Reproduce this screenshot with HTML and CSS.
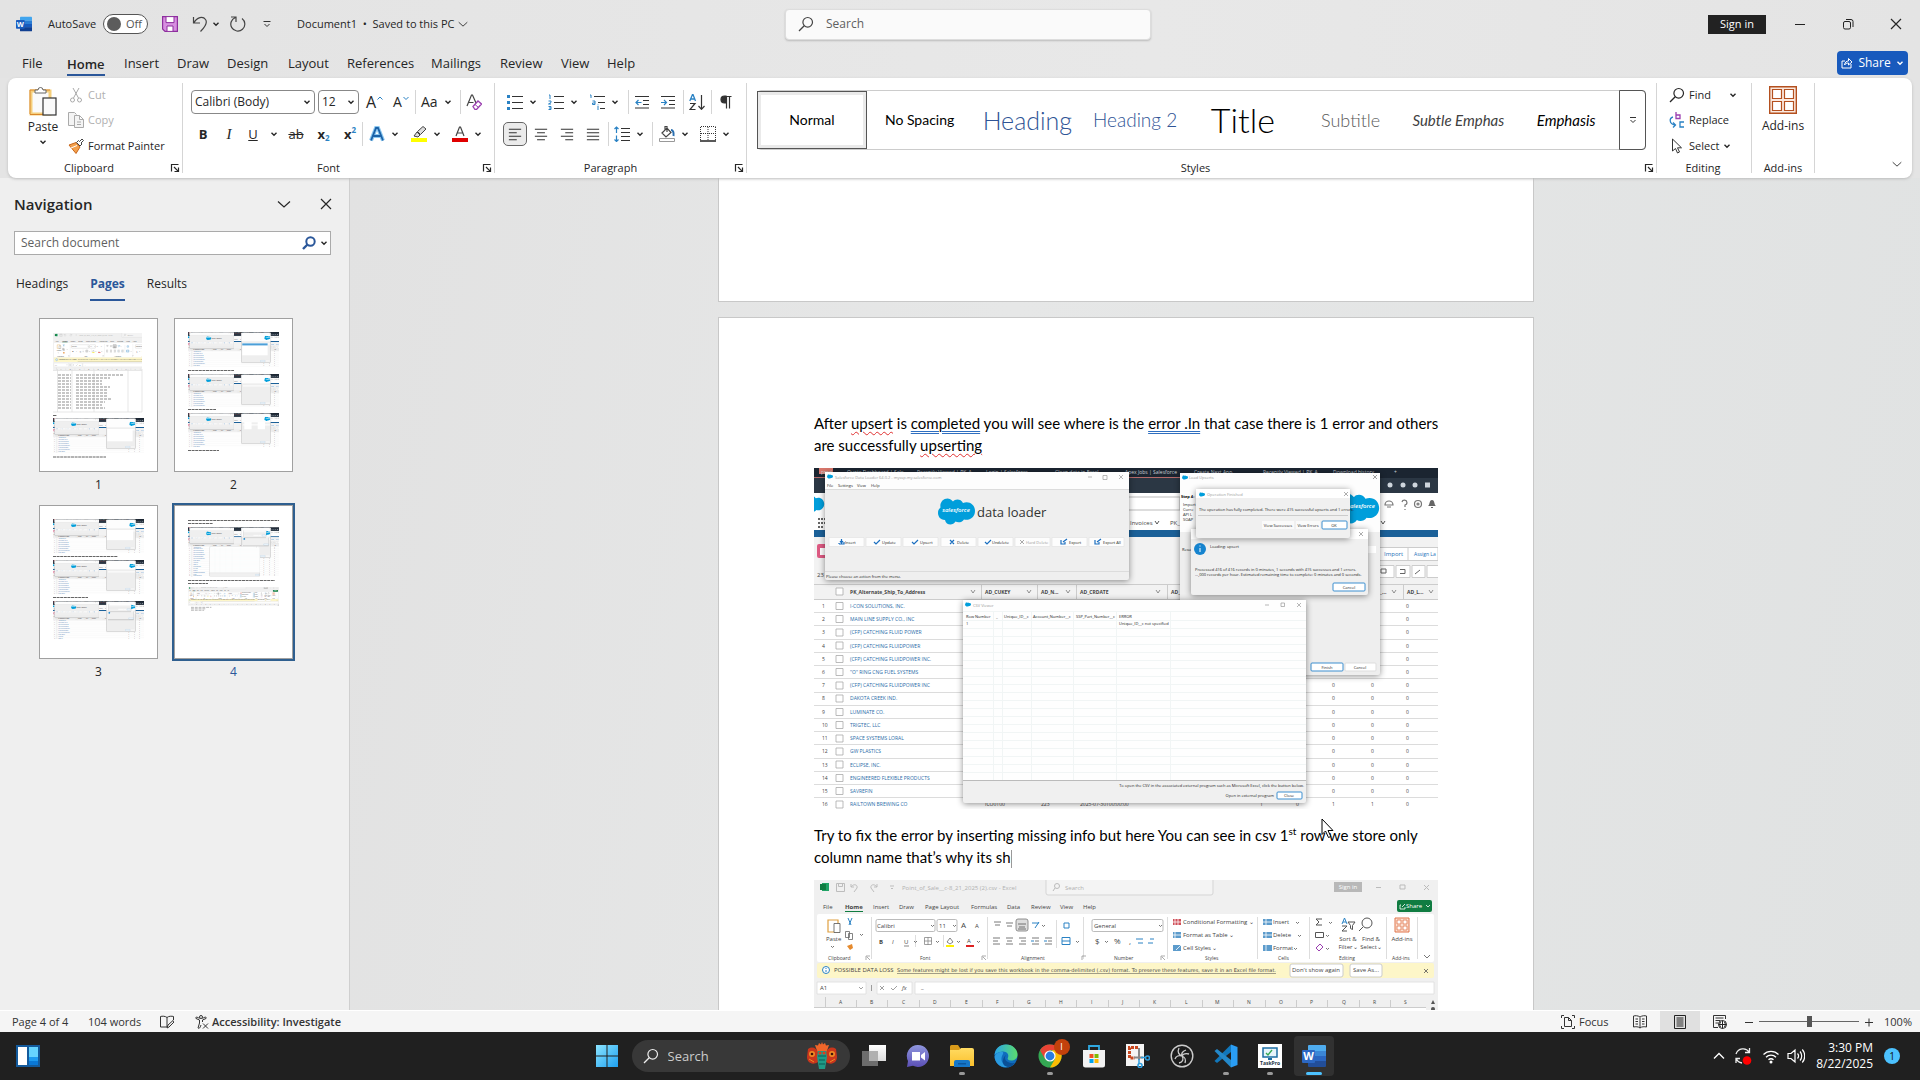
FILE: index.html
```html
<!DOCTYPE html>
<html lang="en">
<head>
<meta charset="utf-8">
<meta name="viewport" content="width=device-width, initial-scale=1">
<title>Document1 - Word</title>
<link rel="stylesheet" href="styles.css">
</head>
<body>
<svg class="defs" aria-hidden="true">
  <defs>
    <linearGradient id="g-win" x1="0" y1="0" x2="1" y2="1"><stop offset="0" stop-color="#8be4ff"/><stop offset="1" stop-color="#1ea0f0"/></linearGradient>
    <linearGradient id="g-chat" x1="0" y1="0" x2="0" y2="1"><stop offset="0" stop-color="#8f96dd"/><stop offset="1" stop-color="#5b4fb5"/></linearGradient>
    <linearGradient id="g-folder" x1="0" y1="0" x2="0" y2="1"><stop offset="0" stop-color="#ffdb62"/><stop offset="1" stop-color="#fbc02d"/></linearGradient>
    <linearGradient id="g-edge" x1="0" y1="0" x2="1" y2="0"><stop offset="0" stop-color="#2aa5e8"/><stop offset="1" stop-color="#5bdc6c"/></linearGradient>
    <linearGradient id="g-task" x1="0" y1="0" x2="0" y2="1"><stop offset="0" stop-color="#fff"/><stop offset="1" stop-color="#dcdcdc"/></linearGradient>
  </defs>
  <symbol id="chev" viewBox="0 0 8 8"><path d="M1.5 2.8 4 5.2 6.5 2.8" fill="none" stroke="currentColor" stroke-width="1.4"/></symbol>
  <symbol id="chev-lg" viewBox="0 0 14 14"><path d="M1 4.5 7 10 13 4.5" fill="none" stroke="currentColor" stroke-width="1.2"/></symbol>
  <symbol id="cross" viewBox="0 0 14 14"><path d="M2 2 12 12M12 2 2 12" fill="none" stroke="currentColor" stroke-width="1.2"/></symbol>
  <symbol id="launch" viewBox="0 0 10 10"><path d="M1.5 8.5V1.5H8.5M4 4 8.3 8.3M8.5 4.5V8.5H4.5" fill="none" stroke="currentColor" stroke-width="1.2"/></symbol>
  <symbol id="lens" viewBox="0 0 16 16"><circle cx="9.7" cy="6.3" r="4.8" fill="none" stroke="currentColor" stroke-width="1.2"/><path d="M6.2 9.8 1 15" stroke="currentColor" stroke-width="1.3"/></symbol>
  <symbol id="word" viewBox="0 0 24 24"><path d="M7 1h16a1 1 0 0 1 1 1v5H6V2a1 1 0 0 1 1-1z" fill="#41a5ee"/><path d="M6 7h18v5.500H6z" fill="#2b7cd3"/><path d="M6 12h18v5.500H6z" fill="#185abd"/><path d="M6 17h18v5a1 1 0 0 1-1 1H7a1 1 0 0 1-1-1z" fill="#103f91"/><rect y="6" width="13" height="13" rx="1" fill="#1b5cbe"/><text x="6.500" y="16" text-anchor="middle" class="logo-letter">W</text></symbol>
  <symbol id="cloud" viewBox="0 0 37 28"><path d="M15 4.500C17 1.500 23 1.500 25 6c6-2.500 12 1.500 12 8s-6 10-11 8.500c-2 3-6 3.500-8.500 2C15 29 8 28.500 7 23 2 23 0 19 0 16c0-3 1-4 2.500-5.500C1 3 10-2 15 4.500z" fill="#009edb"/></symbol>
  <symbol id="lines-l" viewBox="0 0 16 16"><path d="M1 2.500H15M1 6.500H10M1 10.500H15M1 14.500H10" stroke="#333" stroke-width="1.200"/></symbol>
</svg>

<header class="titlebar">
  <div class="quick">
    <svg class="i16"><use href="#word"/></svg>
    <label class="autosave">AutoSave <span class="switch"><input type="checkbox" role="switch"><span class="knob"></span>Off</span></label>
    <button class="btn" aria-label="Save"><svg class="i16" viewBox="0 0 16 16"><path d="M.6.600h14.800v14.800H3L.6 13z" fill="#d78fe0" stroke="#8e2f9e" stroke-width="1.200"/><path d="M4 .600h8v6H4zM5 10h6v5.400H5z" fill="#fff" stroke="#8e2f9e"/></svg></button>
    <button class="btn undo" aria-label="Undo"><svg class="i16" viewBox="0 0 16 16"><path d="M1.500 1v6H8M1.800 7C5 1 11 0 13.500 3.500S13 11 8.500 15.500" fill="none" stroke="#444" stroke-width="1.200"/></svg><svg class="i8"><use href="#chev"/></svg></button>
    <button class="btn" aria-label="Redo"><svg class="i16" viewBox="0 0 16 16"><path d="M1 1h5v5M5.500 1.500A7 7 0 1 0 12 2.500" fill="none" stroke="#444" stroke-width="1.200"/></svg></button>
    <button class="btn customize" aria-label="Customize toolbar"><svg class="i8" viewBox="0 0 8 8"><path d="M.5 1.500H7.500M1.500 4 4 6.500 6.500 4" fill="none" stroke="#333"/></svg></button>
    <button class="btn doc-name">Document1 &nbsp;•&nbsp; Saved to this PC <svg class="i10"><use href="#chev-lg"/></svg></button>
  </div>
  <label class="search-top"><svg class="i16"><use href="#lens"/></svg><input type="search" placeholder="Search" aria-label="Search"></label>
  <div class="window-tools">
    <button class="sign-in">Sign in</button>
    <button class="btn win" aria-label="Minimize"><svg class="i14" viewBox="0 0 14 14"><path d="M2 7.500H12" stroke="#222"/></svg></button>
    <button class="btn win" aria-label="Restore"><svg class="i14" viewBox="0 0 14 14"><rect x="2.500" y="4.500" width="7" height="7.500" rx="1.500" fill="none" stroke="#222"/><path d="M5 2.500h5a2 2 0 0 1 2 2V10" fill="none" stroke="#222"/></svg></button>
    <button class="btn win" aria-label="Close"><svg class="i14"><use href="#cross"/></svg></button>
  </div>
</header>

<nav class="tabs" aria-label="Ribbon tabs">
  <a href="#file">File</a><a href="#home" class="on"><span>Home</span></a><a href="#insert">Insert</a><a href="#draw">Draw</a><a href="#design">Design</a><a href="#layout">Layout</a><a href="#references">References</a><a href="#mailings">Mailings</a><a href="#review">Review</a><a href="#view">View</a><a href="#help">Help</a>
  <button class="share"><svg class="i12" viewBox="0 0 12 12"><path d="M4 4H1v7h9V7M3.500 8c.500-3 2-4 4-4V1.500L11 5 7.500 8V6C5.500 6 4.500 6.500 3.500 8z" fill="none" stroke="#fff"/></svg>Share<svg class="i8"><use href="#chev"/></svg></button>
</nav>

<section class="ribbon" aria-label="Home">
  <div class="group g-clip">
    <div class="clip">
      <button class="big"><svg class="i30" viewBox="0 0 28 30"><rect x="2" y="5" width="19" height="23" fill="#fafafa" stroke="#f5cf7c" stroke-width="3"/><path d="M1 28V4h20" fill="none" stroke="#d9872b"/><path d="M1 28.500h13" stroke="#d9872b"/><path d="M6 7V4h3a2.500 2.500 0 0 1 5 0h3v3z" fill="#fff" stroke="#666"/><rect x="14" y="12" width="13" height="17" fill="#fafafa" stroke="#333" stroke-width="1.200"/></svg><span>Paste</span><svg class="i8"><use href="#chev"/></svg></button>
      <div class="stack">
        <button class="btn off"><svg class="i16" viewBox="0 0 16 16"><g fill="none" stroke="#aaa"><path d="M5 1 10.500 11M11 1 5.500 11"/><circle cx="4.500" cy="13" r="2"/><circle cx="11.500" cy="13" r="2"/></g></svg>Cut</button>
        <button class="btn off"><svg class="i16" viewBox="0 0 16 16"><path d="M6 13.500H.5V.500h6l2 2M6.500 3.500h5l4 4v8h-9zM11.500 3.500v4h4M9 10h4M9 12.500h4" fill="#f4f4f4" stroke="#aaa"/></svg>Copy</button>
        <button class="btn"><svg class="i16" viewBox="0 0 16 16"><path d="M1 7 8 4.500 12 9 8 15.500z" fill="#f3a04c" stroke="#c9661a"/><path d="M3 10 9 7.500" stroke="#fff"/><path d="M8.500 4.500 12 8l2-2-1-1 2.500-2.500L14 1l-2.500 2.500-1-1z" fill="#fff" stroke="#444"/></svg>Format Painter</button>
      </div>
    </div>
    <div class="cap"><span>Clipboard</span><button class="btn launch" aria-label="Clipboard settings"><svg class="i10"><use href="#launch"/></svg></button></div>
  </div>

  <div class="group g-font">
    <div class="row font-1">
      <span class="combo"><select aria-label="Font"><option>Calibri (Body)</option></select><svg class="i8"><use href="#chev"/></svg></span>
      <span class="combo"><select aria-label="Font size"><option>12</option></select><svg class="i8"><use href="#chev"/></svg></span>
      <button class="btn mid" aria-label="Grow font"><span class="a-lg">A</span><svg class="i8 up" viewBox="0 0 8 8"><path d="M1.500 5.500 4 3 6.500 5.500" fill="none" stroke="#2a82c4"/></svg></button>
      <button class="btn mid" aria-label="Shrink font"><span class="a-md">A</span><svg class="i8 up" viewBox="0 0 8 8"><path d="M1.500 3 4 5.500 6.500 3" fill="none" stroke="#2a82c4"/></svg></button>
      <i class="bar"></i>
      <button class="btn gap6" aria-label="Change case"><span class="a-md">Aa</span><svg class="i8"><use href="#chev"/></svg></button>
      <i class="bar"></i>
      <button class="btn" aria-label="Clear formatting"><svg class="i16" viewBox="0 0 16 16"><path d="M1 12 5.500 1h1L10 9M2.500 8.500h5" fill="none" stroke="#444" stroke-width="1.200"/><path d="M7 12.500 12 7l3.500 3-5 5.500H9z" fill="#fff" stroke="#9b3fb0" stroke-width="1.300"/><path d="M9 10.500 12.500 13.500" stroke="#9b3fb0"/></svg></button>
    </div>
    <div class="row font-2">
      <button class="btn mid b">B</button>
      <button class="btn mid it">I</button>
      <button class="btn mid gap12"><u>U</u><svg class="i8"><use href="#chev"/></svg></button>
      <button class="btn mid"><s>ab</s></button>
      <button class="btn mid b" aria-label="Subscript">x<sub>2</sub></button>
      <button class="btn mid b" aria-label="Superscript">x<sup>2</sup></button>
      <i class="bar"></i>
      <button class="btn gap6" aria-label="Text effects"><svg class="i16" viewBox="0 0 16 16"><path d="M2 14.500 7 2h2l5 12.500M4.500 10h7" fill="none" stroke="#8cc8f0" stroke-width="4"/><path d="M2 14.500 7 2h2l5 12.500M4.500 10h7" fill="none" stroke="#1b62a8" stroke-width="1.800"/></svg><svg class="i8"><use href="#chev"/></svg></button>
      <button class="btn gap6" aria-label="Highlight"><svg class="i16" viewBox="0 0 16 16"><path d="M3 10 6 6l3 3-2 2zM6.500 5.500 12 .500 15 3 9.500 8.500z" fill="#ddd" stroke="#444"/><path d="M0 12h16v4H0z" fill="#ff0"/></svg><svg class="i8"><use href="#chev"/></svg></button>
      <button class="btn gap6" aria-label="Font color"><svg class="i16" viewBox="0 0 16 16"><path d="M4 10 7.500 1h1L12 10M5 7h6" fill="none" stroke="#444" stroke-width="1.200"/><path d="M0 12h16v4H0z" fill="#e00000"/></svg><svg class="i8"><use href="#chev"/></svg></button>
    </div>
    <div class="cap"><span>Font</span><button class="btn launch" aria-label="Font settings"><svg class="i10"><use href="#launch"/></svg></button></div>
  </div>

  <div class="group g-para">
    <div class="row para-1">
      <button class="btn gap6" aria-label="Bullets"><svg class="i16" viewBox="0 0 16 16"><path d="M5 2.500H16M5 8.500H16M5 14.500H16" stroke="#333" stroke-width="1.200"/><path d="M0 1h3v3H0zM0 7h3v3H0zM0 13h3v3H0z" fill="#2a82c4"/></svg><svg class="i8"><use href="#chev"/></svg></button>
      <button class="btn gap6" aria-label="Numbering"><svg class="i16" viewBox="0 0 16 16"><path d="M6 2.500H16M6 8.500H16M6 14.500H16" stroke="#333" stroke-width="1.200"/><path d="M1 1h1v4M.5 7H3v1.500L.5 10H3M.5 12.500H3V15.500H.5M1 14H3" fill="none" stroke="#2a82c4"/></svg><svg class="i8"><use href="#chev"/></svg></button>
      <button class="btn gap6" aria-label="Multilevel list"><svg class="i16" viewBox="0 0 16 16"><path d="M5 2.500H16M9 8.500H16M11 14.500H16" stroke="#333" stroke-width="1.200"/><path d="M1 1h1v3M3.500 7H6v3.500H3.500V9H6M9 12v4M9 10.500v.800" fill="none" stroke="#2a82c4"/></svg><svg class="i8"><use href="#chev"/></svg></button>
      <i class="bar"></i>
      <button class="btn" aria-label="Decrease indent"><svg class="i14" viewBox="0 0 14 14"><path d="M0 1.500H14M8 5.500H14M8 9.500H14M0 13H14" stroke="#333" stroke-width="1.200"/><path d="M6.500 7.500H1M3.500 5 1 7.500 3.500 10" fill="none" stroke="#2a82c4" stroke-width="1.200"/></svg></button>
      <button class="btn" aria-label="Increase indent"><svg class="i14" viewBox="0 0 14 14"><path d="M0 1.500H14M8 5.500H14M8 9.500H14M0 13H14" stroke="#333" stroke-width="1.200"/><path d="M0 7.500H5.500M3 5 5.500 7.500 3 10" fill="none" stroke="#2a82c4" stroke-width="1.200"/></svg></button>
      <i class="bar"></i>
      <button class="btn" aria-label="Sort"><svg class="i16" viewBox="0 0 16 16"><path d="M.8 7 3.500 .500h.5L6.500 7M1.800 5h4" fill="none" stroke="#2a82c4" stroke-width="1.300"/><path d="M1 9.500H6L1 15.500H6.500M12.500 1V15M9.500 12 12.500 15.300 15.500 12" fill="none" stroke="#333" stroke-width="1.200"/></svg></button>
      <i class="bar"></i>
      <button class="btn" aria-label="Show marks"><svg class="i14" viewBox="0 0 14 14"><path d="M7 1H5.500a3.500 3.500 0 0 0 0 7H7zM7.500 13.500V1.500M10.500 13.500V1.500M6 1.500h6.500" fill="#333" stroke="#333" stroke-width="1.200"/></svg></button>
    </div>
    <div class="row para-2">
      <button class="btn mid pressed" aria-label="Align left"><svg class="i14"><use href="#lines-l"/></svg></button>
      <button class="btn" aria-label="Center"><svg class="i14" viewBox="0 0 16 16"><path d="M1 2.500H15M3.500 6.500H12.500M1 10.500H15M3.500 14.500H12.500" stroke="#333" stroke-width="1.200"/></svg></button>
      <button class="btn" aria-label="Align right"><svg class="i14" viewBox="0 0 16 16"><path d="M1 2.500H15M6 6.500H15M1 10.500H15M6 14.500H15" stroke="#333" stroke-width="1.200"/></svg></button>
      <button class="btn" aria-label="Justify"><svg class="i14" viewBox="0 0 16 16"><path d="M1 2.500H15M1 6.500H15M1 10.500H15M1 14.500H15" stroke="#333" stroke-width="1.200"/></svg></button>
      <i class="bar"></i>
      <button class="btn gap6" aria-label="Line spacing"><svg class="i16" viewBox="0 0 16 16"><path d="M7 2.500H16M7 6.500H16M7 10.500H16M7 14.500H16" stroke="#333" stroke-width="1.200"/><path d="M2.500 1V7M2.500 9.500V15.500M.5 3 2.500 1 4.500 3M.5 13.500 2.500 15.500 4.500 13.500" fill="none" stroke="#2a82c4" stroke-width="1.200"/></svg><svg class="i8"><use href="#chev"/></svg></button>
      <i class="bar"></i>
      <button class="btn gap6" aria-label="Shading"><svg class="i16" viewBox="0 0 16 16"><path d="M3 7 8 2l4 4.500-5 4.500zM6 4V.500h2V6" fill="#fff" stroke="#444" stroke-width="1.200"/><path d="M12 4c2 0 3 2.500 2.500 6" fill="none" stroke="#2a6fb0" stroke-width="2"/><path d="M.5 12.500h15v3H.5z" fill="#fff" stroke="#999"/></svg><svg class="i8"><use href="#chev"/></svg></button>
      <button class="btn gap6" aria-label="Borders"><svg class="i16" viewBox="0 0 16 16"><path d="M1 .500H15.500M.5 1V14M15.500 1V14M8 1V14M1 7.500H15" fill="none" stroke="#333" stroke-dasharray="1 1"/><path d="M0 15H16" stroke="#222" stroke-width="1.500"/></svg><svg class="i8"><use href="#chev"/></svg></button>
    </div>
    <div class="cap"><span>Paragraph</span><button class="btn launch" aria-label="Paragraph settings"><svg class="i10"><use href="#launch"/></svg></button></div>
  </div>

  <div class="group g-styles">
    <div class="gallery">
      <button class="st chosen">Normal</button><button class="st">No Spacing</button><button class="st st-h1">Heading</button><button class="st st-h2">Heading 2</button><button class="st st-title">Title</button><button class="st st-sub">Subtitle</button><button class="st st-se">Subtle Emphas</button><button class="st st-e">Emphasis</button>
      <button class="more" aria-label="More styles"><svg class="i8" viewBox="0 0 8 8"><path d="M1 1.500H7M1.500 4 4 6.500 6.500 4" fill="none" stroke="#333"/></svg></button>
    </div>
    <div class="cap"><span>Styles</span><button class="btn launch" aria-label="Style settings"><svg class="i10"><use href="#launch"/></svg></button></div>
  </div>

  <div class="group g-edit">
    <div class="stack">
      <button class="btn find"><svg class="i16"><use href="#lens"/></svg>Find<svg class="i8"><use href="#chev"/></svg></button>
      <button class="btn"><svg class="i16" viewBox="0 0 16 16"><path d="M7 0V6.500H11V3H7" fill="none" stroke="#9b3fb0" stroke-width="1.300"/><path d="M15 10H11v5H15M4 5C0 6 0 12 6 13M4 10.500 6.500 13 4 15.500" fill="none" stroke="#2a82c4" stroke-width="1.300"/></svg>Replace</button>
      <button class="btn sel"><svg class="i16" viewBox="0 0 16 16"><path d="M3.500 1V13L6.500 10.500 8.500 15 10.500 14 8.500 9.800H12.500z" fill="#fff" stroke="#333"/></svg>Select<svg class="i8"><use href="#chev"/></svg></button>
    </div>
    <div class="cap plain"><span>Editing</span></div>
  </div>

  <div class="group g-add">
    <button class="big"><svg class="i30" viewBox="0 0 28 28"><path d="M.7.700h26.600v26.600H.700z" fill="#fbe9df" stroke="#b4501f" stroke-width="1.400"/><path d="M3.500 3.500h9v9h-9zM15.500 3.500h9v9h-9zM3.500 15.500h9v9h-9zM15.500 15.500h9v9h-9z" fill="#fff" stroke="#b4501f" stroke-width="1.200"/></svg><span>Add-ins</span></button>
    <div class="cap plain"><span>Add-ins</span></div>
  </div>
  <button class="btn collapse" aria-label="Collapse ribbon"><svg class="i10"><use href="#chev-lg"/></svg></button>
</section>

<main class="work">
  <aside class="pane" aria-label="Navigation">
    <div class="pane-head"><h2>Navigation</h2><button class="btn" aria-label="Pane options"><svg class="i14"><use href="#chev-lg"/></svg></button><button class="btn" aria-label="Close pane"><svg class="i14"><use href="#cross"/></svg></button></div>
    <label class="pane-search"><input type="search" placeholder="Search document" aria-label="Search document"><svg class="i14" viewBox="0 0 14 14"><circle cx="8.500" cy="5.500" r="4.200" fill="none" stroke="#2b579a" stroke-width="2"/><path d="M5.500 8.500 1 13" stroke="#2b579a" stroke-width="2.400"/></svg><svg class="i8"><use href="#chev"/></svg></label>
    <nav class="pane-tabs"><a href="#headings">Headings</a><a href="#pages" class="on">Pages</a><a href="#results">Results</a></nav>
    <div class="thumbs">
      <a href="#p1" class="thumb"><svg viewBox="0 0 117 152">
        <svg x="13" y="14" width="89" height="37" viewBox="0 0 300 125"><use href="#sheet-pic"/></svg>
        <path d="M13 51.500H102M13 93H102M17.500 50V93M32 50V93M54 50V93M88 50V93M102 50V93" stroke="#ddd" stroke-width=".7"/>
        <path d="M18 56H31M18 59H31M18 62H31M18 65H31M18 68H31M18 71H31M18 74H31M18 77H31M18 80H31M18 83H31M18 86H31M18 89H31M36 56H84M36 59H70M36 62H62M36 65H62M36 68H70M36 71H68M36 74H67M36 77H68M36 80H71M36 83H65M36 86H62M36 89H65" stroke="#8d8d8d" stroke-dasharray="3 1"/>
        <path d="M13 96.500h4M13 138H66" stroke="#666" stroke-dasharray="3 .6"/>
        <svg x="13" y="99" width="91" height="35" viewBox="0 0 624 240"><use href="#shot-back"/><use href="#shot-loader"/><use href="#shot-step"/><path d="M372 75h174v85H372z" fill="#fff"/></svg></svg><span>1</span></a>
      <a href="#p2" class="thumb"><svg viewBox="0 0 117 152">
        <svg x="13" y="13" width="91" height="35" viewBox="0 0 624 240"><use href="#shot-back"/><use href="#shot-loader"/><use href="#shot-step"/><path d="M372 75h174v85H372z" fill="#fff"/><path d="M372 78h174v14H372z" fill="#4c9fd8"/></svg>
        <svg x="13" y="55" width="91" height="33" viewBox="0 0 624 226"><use href="#shot-back"/><use href="#shot-loader"/><use href="#shot-step"/></svg>
        <svg x="13" y="94" width="91" height="34" viewBox="0 0 624 233"><use href="#shot-back"/><use href="#shot-loader"/><use href="#shot-step"/><path d="M386 62h50v50h-50zM478 62h50v50h-50z" fill="#fff"/></svg>
        <path d="M13 51.500H59M13 90.500H41M13 131.500H44" stroke="#666" stroke-dasharray="3 .6"/></svg><span>2</span></a>
      <a href="#p3" class="thumb"><svg viewBox="0 0 117 152">
        <svg x="13" y="13" width="91" height="34" viewBox="0 0 624 233"><use href="#shot-back"/><use href="#shot-loader"/><use href="#shot-step"/><path d="M370 75h180v70H370z" fill="#fff"/></svg>
        <svg x="13" y="54" width="91" height="34" viewBox="0 0 624 233"><use href="#shot-back"/><use href="#shot-loader"/><use href="#shot-step"/></svg>
        <svg x="13" y="95" width="91" height="38" viewBox="0 0 624 260"><use href="#shot-back"/><use href="#shot-loader"/><use href="#shot-step"/><use href="#shot-dialogs"/></svg>
        <path d="M13 50.500H78M13 91.500H48" stroke="#666" stroke-dasharray="3 .6"/></svg><span>3</span></a>
      <a href="#p4" class="thumb current"><svg viewBox="0 0 117 152">
        <path d="M13 14.500H104M13 17.500H38M13 74.500H100M13 77.500H33" stroke="#666" stroke-dasharray="3 .6"/>
        <svg x="13" y="21" width="91" height="50" viewBox="0 0 624 341"><use href="#shot-back"/><use href="#shot-loader"/><use href="#shot-step"/><use href="#shot-dialogs"/><use href="#shot-csv"/></svg>
        <svg x="13" y="81" width="91" height="24" viewBox="0 0 624 165"><use href="#sheet-pic"/><path d="M20 140H160M20 150H120M20 160H110" stroke="#888" stroke-width="4" stroke-dasharray="20 6"/></svg></svg><span>4</span></a>
    </div>
  </aside>

  <div class="canvas">
    <div class="sheet prev"></div>
    <article class="sheet page">
      <p>After <span class="sp">upsert</span> is <span class="gr">completed</span> you will see where is the <span class="gr">error .In</span> that case there is 1 error and others are successfully <span class="sp">upserting</span></p>
      <svg class="shot" viewBox="0 0 624 341" role="img" aria-label="Data loader upsert result">
        <g id="shot-back">
          <path fill="#fff" d="M0 0h624v341H0z"/><path fill="#1b2531" d="M0 0h624v25H0z"/><path fill="#2b3744" d="M0 10h624v15H0z"/><path fill="#b56a6a" d="M0 9h380v1H0z"/>
          <path d="M5 0h14v6H5z" fill="#d9776c"/>
          <g class="tabtext"><text x="7" y="6">prod</text><text x="33" y="6">Quote Dashboard | Sale</text><text x="103" y="6">Recently Viewed | PK_A</text><text x="172" y="6">Login | Salesforce</text><text x="241" y="6">Clean data in Excel</text><text x="311" y="6">Apex Jobs | Salesforce</text><text x="380" y="6">Create Next App</text><text x="449" y="6">Recently Viewed | PK_A</text><text x="519" y="6">Download history</text><text x="580" y="6">+</text></g>
          <g fill="#cfd6dd"><circle cx="576" cy="17" r="2.500"/><circle cx="589" cy="17" r="2.500"/><circle cx="601" cy="17" r="2.500"/><path d="M611 14.500h5v5h-5z"/></g>
          <svg x="-20" y="26" width="34" height="20"><use href="#cloud"/></svg>
          <path d="M4 50h2v2H4zM7 50h2v2H7zM10 50h2v2h-2zM4 54h2v2H4zM7 54h2v2H7zM10 54h2v2h-2zM4 58h2v2H4zM7 58h2v2H7z" fill="#666"/>
          <path d="M300 29h66v13h-66z" fill="#fff" stroke="#bbb"/>
          <g fill="none" stroke="#777" stroke-width="1.200"><path d="M571 37a4 4 0 0 1 8 0zM573 39h4M588 34a2.500 2.500 0 1 1 3 3v2M591 41v1"/><circle cx="604" cy="36" r="3.500"/><circle cx="604" cy="36" r="1"/></g><path d="M614 38c2-1 1-6 4-6s2 5 4 6zM617 39h2v1h-2z" fill="#666"/>
          <text x="316" y="57" class="t6">Invoices</text><path d="m341 53 2 3 2-3M567 53l2 3 2-3" fill="none" stroke="#555"/><text x="356" y="57" class="t6">PK_</text>
          <path fill="#1b6098" d="M0 62h624v7H0z"/><path fill="#f2f2f2" d="M0 69h624v62H0z"/>
          <rect x="3" y="76" width="14" height="14" rx="2" fill="#de5a83"/><path d="M6 80h8v7H6z" fill="#fff"/><text x="3" y="109" class="t6">23</text>
          <path fill="#fff" stroke="#ccc" d="M548 79.500h76v13h-76zM594 80v12M548 97.500h32v12h-32zM582 97.500h14v12h-14zM598 97.500h13v12h-13zM613 97.500h12v12h-12z"/><path d="M586 101.500h5v4h-5M601 106l5-4M567 101h5v4h-5z" stroke="#666" fill="none"/>
          <text x="570" y="88" class="t6 act">Import</text><text x="600" y="88" class="t5 act">Assign La</text>
          <path d="M0 116.500h624M0 131.500h624M167.500 117v14M223.500 117v14M262.500 117v14M353.500 117v14M589.500 117v14" stroke="#ccc" fill="none"/>
          <g class="tb"><text x="36" y="126">PK_Alternate_Ship_To_Address</text><text x="171" y="126">AD_CUKEY</text><text x="227" y="126">AD_N...</text><text x="266" y="126">AD_CRDATE</text><text x="357" y="126">AD_</text><text x="566" y="126">_...</text><text x="593" y="126">AD_L...</text></g>
          <path d="m157 122 2 3 2-3M213 122l2 3 2-3M252 122l2 3 2-3M342 122l2 3 2-3M578 122l2 3 2-3M615 122l2 3 2-3" fill="none" stroke="#777" stroke-width=".8"/>
          <path d="M0 144.500h624M0 157.500h624M0 171.500h624M0 184.500h624M0 197.500h624M0 210.500h624M0 224.500h624M0 237.500h624M0 250.500h624M0 263.500h624M0 276.500h624M0 290.500h624M0 303.500h624M0 316.500h624M0 329.500h624" stroke="#dcdcdc"/>
          <path d="M22 120h7v7h-7zM22 134.500h7v7h-7zM22 147.500h7v7h-7zM22 161h7v7h-7zM22 174h7v7h-7zM22 187.500h7v7h-7zM22 200.500h7v7h-7zM22 214h7v7h-7zM22 227h7v7h-7zM22 240.500h7v7h-7zM22 253.500h7v7h-7zM22 267h7v7h-7zM22 280h7v7h-7zM22 293h7v7h-7zM22 306.500h7v7h-7zM22 319.500h7v7h-7zM22 333h7v7h-7z" fill="#fff" stroke="#aaa" stroke-width=".8"/>
          <g class="t5"><text><tspan x="8" y="140">1</tspan><tspan x="8" y="153">2</tspan><tspan x="8" y="166">3</tspan><tspan x="8" y="180">4</tspan><tspan x="8" y="193">5</tspan><tspan x="8" y="206">6</tspan><tspan x="8" y="219">7</tspan><tspan x="8" y="232">8</tspan><tspan x="8" y="246">9</tspan><tspan x="8" y="259">10</tspan><tspan x="8" y="272">11</tspan><tspan x="8" y="285">12</tspan><tspan x="8" y="299">13</tspan><tspan x="8" y="312">14</tspan><tspan x="8" y="325">15</tspan><tspan x="8" y="338">16</tspan></text></g>
          <text class="names"><tspan x="36" y="140">I-CON SOLUTIONS, INC.</tspan><tspan x="36" y="153">MAIN LINE SUPPLY CO., INC</tspan><tspan x="36" y="166">(CFP) CATCHING FLUID POWER</tspan><tspan x="36" y="180">(CFP) CATCHING FLUIDPOWER</tspan><tspan x="36" y="193">(CFP) CATCHING FLUIDPOWER INC.</tspan><tspan x="36" y="206">"O" RING CNG FUEL SYSTEMS</tspan><tspan x="36" y="219">(CFP) CATCHING FLUIDPOWER INC</tspan><tspan x="36" y="232">DAKOTA CREEK IND.</tspan><tspan x="36" y="246">LUMINATE CO.</tspan><tspan x="36" y="259">TRIGTEC, LLC</tspan><tspan x="36" y="272">SPACE SYSTEMS LORAL</tspan><tspan x="36" y="285">GW PLASTICS</tspan><tspan x="36" y="299">ECLIPSE, INC.</tspan><tspan x="36" y="312">ENGINEERED FLEXIBLE PRODUCTS</tspan><tspan x="36" y="325">SAVREFIN</tspan><tspan x="36" y="338">RAILTOWN BREWING CO</tspan></text>
          <g class="t5"><text><tspan x="592" y="140">0</tspan><tspan x="592" y="153">0</tspan><tspan x="592" y="166">0</tspan><tspan x="592" y="180">0</tspan><tspan x="592" y="193">0</tspan><tspan x="592" y="206">0</tspan><tspan x="592" y="219">0</tspan><tspan x="592" y="232">0</tspan><tspan x="592" y="246">0</tspan><tspan x="592" y="259">0</tspan><tspan x="592" y="272">0</tspan><tspan x="592" y="285">0</tspan><tspan x="592" y="299">0</tspan><tspan x="592" y="312">0</tspan><tspan x="592" y="325">0</tspan><tspan x="592" y="338">0</tspan></text>
          <text><tspan x="518" y="219">0</tspan><tspan x="557" y="219">0</tspan><tspan x="518" y="232">0</tspan><tspan x="557" y="232">0</tspan><tspan x="518" y="246">0</tspan><tspan x="557" y="246">0</tspan><tspan x="518" y="259">0</tspan><tspan x="557" y="259">0</tspan><tspan x="518" y="272">0</tspan><tspan x="557" y="272">0</tspan><tspan x="518" y="285">0</tspan><tspan x="557" y="285">0</tspan><tspan x="518" y="299">0</tspan><tspan x="557" y="299">0</tspan><tspan x="518" y="312">0</tspan><tspan x="557" y="312">0</tspan><tspan x="518" y="325">0</tspan><tspan x="557" y="325">0</tspan><tspan x="518" y="338">1</tspan><tspan x="557" y="338">1</tspan></text>
          <text><tspan x="171" y="338">ICO0100</tspan><tspan x="227" y="338">223</tspan><tspan x="266" y="338">2025-07-30T00:00:00</tspan><tspan x="446" y="338">1</tspan><tspan x="482" y="338">0</tspan></text></g>
        </g>
        <g id="shot-loader" class="dialog">
          <g class="drop"><rect x="11" y="4" width="304" height="108" rx="2" fill="#efefef"/></g><path d="M11 4h304v17H11z" fill="#fdfdfd"/><path d="M11 21.500h304M11 103.500h304" stroke="#dcdcdc"/>
          <svg x="13" y="6" width="6" height="5"><use href="#cloud"/></svg><text x="21" y="11" class="dim">Salesforce Data Loader 64.0.2 - myssp.my.salesforce.com</text>
          <g class="t5"><text x="13" y="19">File</text><text x="24" y="19">Settings</text><text x="43" y="19">View</text><text x="57" y="19">Help</text><text x="12" y="110">Please choose an action from the menu.</text></g>
          <path d="M274 9h4M289 7.500h4v4h-4zM305 7l4 4M309 7l-4 4" stroke="#999" fill="none" stroke-width=".7"/>
          <svg x="124" y="29" width="37" height="28"><use href="#cloud"/></svg><text x="142" y="44" class="sf">salesforce</text><text x="163" y="49" class="dl">data loader</text>
          <path d="M15 69.500h35v9H15zM52 69.500h35v9H52zM89 69.500h35v9H89zM127 69.500h35v9h-35zM164 69.500h35v9h-35zM201 69.500h35v9h-35zM238 69.500h35v9h-35zM275 69.500h35v9h-35z" fill="#fdfdfd" stroke="#e0e0e0" stroke-width=".6"/>
          <path d="M25 76v-1M25 76h5v-2M27.500 71v4M26 73l1.500 2 1.500-2M60 74l2 2 4-4M98 74l2 2 4-4M136 72l4 4M140 72l-4 4M171 74l2 2 4-4M247 72v4h4v-2M249 74l4-3M281 72v4h4v-2M283 74l4-3" fill="none" stroke="#1b6fc0" stroke-width="1.200"/><path d="m206 72 4 4M210 72l-4 4" stroke="#aaa"/>
          <g class="t5"><text x="31" y="76">Insert</text><text x="68" y="76">Update</text><text x="106" y="76">Upsert</text><text x="143" y="76">Delete</text><text x="178" y="76">Undelete</text><text x="255" y="76">Export</text><text x="289" y="76">Export All</text></g><text x="212" y="76" class="dim">Hard Delete</text>
        </g>
        <g id="shot-step" class="dialog">
          <g class="drop"><rect x="366" y="5" width="200" height="202" rx="2" fill="#eee"/></g><path d="M366 5h200v59H366z" fill="#fdfdfd"/>
          <svg x="368" y="7" width="6" height="5"><use href="#cloud"/></svg><text x="375" y="11" class="dim">Load Upserts</text><path d="m559 7 4 4M563 7l-4 4" stroke="#888" stroke-width=".8"/>
          <text x="367" y="30" class="tb">Step 4:</text><text class="t5"><tspan x="369" y="38">Import</tspan><tspan x="369" y="43">Curre</tspan><tspan x="369" y="48">API L</tspan><tspan x="369" y="53">SOAP</tspan><tspan x="368" y="83">Resu</tspan></text>
          <svg x="522" y="24" width="44" height="32"><use href="#cloud"/></svg><text x="547" y="40" class="sf">salesforce</text>
          <rect x="377" y="78" width="185" height="7" fill="#fff"/>
          <rect x="497" y="195" width="32" height="8" rx="1" fill="#fff" stroke="#3d8fd0"/><rect x="531" y="195" width="31" height="8" rx="1" fill="#fff" stroke="#ddd"/><text x="513" y="201" class="t5 c">Finish</text><text x="546" y="201" class="t5 c">Cancel</text>
        </g>
        <g id="shot-dialogs" class="dialog">
          <g class="drop"><rect x="377" y="61" width="177" height="66" rx="2" fill="#f0f0f0"/></g><path d="M377 61h177v10H377z" fill="#fff"/><path d="m545 64 4 4M549 64l-4 4" stroke="#999" stroke-width=".8"/>
          <circle cx="386" cy="81" r="6" fill="#1684cf"/><path d="M386 80v4M386 77.500v1" stroke="#fff"/><text class="t5"><tspan x="396" y="80">Loading: upsert</tspan><tspan x="381" y="103">Processed 416 of 416 records in 0 minutes, 1 seconds with 415 successes and 1 errors.</tspan><tspan x="381" y="108">...,000 records per hour. Estimated remaining time to complete: 0 minutes and 0 seconds.</tspan></text>
          <rect x="519" y="115" width="32" height="8" rx="1" fill="#fff" stroke="#3d8fd0"/><text x="535" y="121" class="t5 c">Cancel</text>
          <g class="drop"><rect x="382" y="21" width="154" height="49" rx="2" fill="#f0f0f0"/></g><path d="M382 21h154v9H382z" fill="#fff"/><path d="m530 24 4 4M534 24l-4 4" stroke="#999" stroke-width=".8"/>
          <svg x="385" y="24" width="6" height="5"><use href="#cloud"/></svg><text x="393" y="28" class="dim">Operation Finished</text><text x="385" y="43" class="t5">The operation has fully completed. There were 415 successful upserts and 1 errors.</text><path d="M384 47.500h150" stroke="#ccc"/>
          <rect x="448" y="53" width="32" height="8" fill="#fafafa"/><rect x="482" y="53" width="24" height="8" fill="#fafafa"/><rect x="508" y="53" width="25" height="8" rx="1" fill="#fff" stroke="#3d8fd0"/><text x="464" y="59" class="t5 c">View Successes</text><text x="494" y="59" class="t5 c">View Errors</text><text x="520" y="59" class="t5 c">OK</text>
        </g>
        <g id="shot-csv" class="dialog">
          <g class="drop"><rect x="149" y="132" width="343" height="203" rx="2" fill="#f0f0f0"/></g><path d="M149 132h343v180H149z" fill="#fefefe"/>
          <svg x="151" y="134" width="6" height="5"><use href="#cloud"/></svg><text x="159" y="139" class="dim">CSV Viewer</text><path d="M451 137h4M467 135h3.500v3.500H467zM483 135l4 4M487 135l-4 4" stroke="#999" fill="none" stroke-width=".7"/>
          <path d="M149 143.500h343M149 152.500h343M149 160.500h343M149 168.500h343M149 176.500h343M149 184.500h343M149 192.500h343M149 200.500h343M149 208.500h343M149 216.500h343M149 224.500h343M149 232.500h343M149 240.500h343M149 248.500h343M149 256.500h343M149 264.500h343M149 272.500h343M149 280.500h343M149 288.500h343M149 296.500h343M149 304.500h343M179.500 143v169M188.500 143v169M217.500 143v169M259.500 143v169M302.500 143v169M356.500 143v169" stroke="#f1f5f5"/><path d="M149 312.500h343" stroke="#bbb"/>
          <text class="t5"><tspan x="152" y="150">Row Number</tspan><tspan x="182" y="150">_</tspan><tspan x="190" y="150">Unique_ID__c</tspan><tspan x="219" y="150">Account_Number__c</tspan><tspan x="262" y="150">SSP_Part_Number__c</tspan><tspan x="305" y="150">ERROR</tspan><tspan x="152" y="157">1</tspan><tspan x="305" y="157">Unique_ID__c not specified</tspan></text>
          <text x="490" y="319" class="t5 e">To open the CSV in the associated external program such as Microsoft Excel, click the button below.</text><text x="460" y="329" class="t5 e">Open in external program</text><rect x="463" y="324" width="25" height="7" rx="1" fill="#fff" stroke="#3d8fd0"/><text x="475" y="329" class="t5 c">Close</text>
        </g>
      </svg>
      <p class="second">Try to fix the error by inserting missing info but here You can see in csv 1<sup>st</sup> row we store only column name that’s why its sh<span class="caret"></span></p>
      <svg class="shot" viewBox="0 0 624 130" role="img" aria-label="Excel workbook">
        <g id="sheet-pic">
          <path d="M0 0h624v130H0z" fill="#f0f0f0"/>
          <rect x="8" y="3" width="7" height="8" fill="#21a366"/><rect x="6" y="4" width="6" height="6" fill="#107c41"/>
          <path d="M22.500 3.500h8v8h-8zM24.500 3.500v3h4v-3M37 4v3h3M37 7c3-4 7-2 6 1l-3 4M63 4v3h-3M63 7c-3-4-7-2-6 1l3 4M76 6h4M77 8l1 1 1-1" fill="none" stroke="#bdbdbd"/>
          <text x="88" y="10" class="x6 pale">Point_of_Sale__c-8_21_2025 (2).csv - Excel</text>
          <rect x="232" y="-4" width="167" height="19" rx="2" fill="#f4f4f4" stroke="#d5d5d5"/><circle cx="243" cy="6" r="2.500" fill="none" stroke="#bbb"/><path d="m241 8-2 3" stroke="#bbb"/><text x="251" y="10" class="x6 pale">Search</text>
          <path d="M520 2h28v10h-28z" fill="#b8b8b8"/><text x="534" y="9" class="x6 w c">Sign in</text><path d="M562 7.500h5M586 5h5v4h-5zM610 5l5 5M615 5l-5 5" fill="none" stroke="#bbb"/>
          <g class="x6"><text x="9" y="29">File</text><text x="31" y="29" class="xb">Home</text><text x="59" y="29">Insert</text><text x="85" y="29">Draw</text><text x="111" y="29">Page Layout</text><text x="157" y="29">Formulas</text><text x="193" y="29">Data</text><text x="217" y="29">Review</text><text x="246" y="29">View</text><text x="269" y="29">Help</text></g><path d="M31 31.500h18" stroke="#107c41"/>
          <rect x="583" y="20" width="35" height="12" rx="2" fill="#107c41"/><text x="600" y="28" class="x6 w c">Share</text><path d="m612 25 2 2 2-2M587 25h-1v4h5v-2M588 27l3-3" stroke="#fff" fill="none" stroke-width=".8"/>
          <rect x="3" y="34" width="617" height="48" rx="2" fill="#fff"/><path d="M57.500 37v42M173.500 37v42M269.500 37v42M353.500 37v42M443.500 37v42M495.500 37v42M572.500 37v42M603.500 37v42M129.500 55v12M101.500 55v12M242.500 40v28" stroke="#ddd"/>
          <path d="M14 40h10v12H14z" fill="#fff" stroke="#e0a040" stroke-width="1.200"/><path d="M20 43.500h6v9h-6z" fill="#fff" stroke="#555" stroke-width=".8"/><path d="m34 38 3 7M38 38l-3 7" stroke="#2a82c4"/><path d="M31.500 51.500h4v6h-4zM34.500 53.500h4v6h-4z" fill="#fff" stroke="#666" stroke-width=".8"/><path d="m33 66 5-2 1 4-3 2z" fill="#e58a2e"/>
          <rect x="62" y="39.500" width="59" height="12" rx="1.500" fill="#fff" stroke="#aaa" stroke-width=".8"/><rect x="123" y="39.500" width="20" height="12" rx="1.500" fill="#fff" stroke="#aaa" stroke-width=".8"/><rect x="278" y="39.500" width="71" height="12" rx="1.500" fill="#fff" stroke="#aaa" stroke-width=".8"/>
          <g class="x6"><text x="63" y="48">Calibri</text><text x="125" y="48">11</text><text x="147" y="48" class="x8">A</text><text x="161" y="48" class="x6">A</text><text x="280" y="48">General</text><text x="12" y="61">Paste</text><text x="65" y="64" class="xb">B</text><text x="78" y="64" class="xi">I</text><text x="90" y="64">U</text><text x="153" y="63">A</text><text x="281" y="64" class="x8">$</text><text x="300" y="64" class="x8">%</text><text x="315" y="64" class="x8">,</text></g>
          <path d="M90 66h5" stroke="#555" stroke-width=".7"/><path d="M132 66h8" stroke="#fff000" stroke-width="2"/><path d="M152 66h8" stroke="#d22" stroke-width="2"/><path d="m133 62 3-4 3 4-3 2z" fill="#fff" stroke="#666" stroke-width=".8"/>
          <path d="M110.500 57.500h7v7h-7zM114 57v8M110 61h8" fill="none" stroke="#888" stroke-width=".8"/>
          <rect x="202" y="39" width="12" height="12" rx="2" fill="#ddd" stroke="#777" stroke-width=".8"/>
          <path d="M180 42h7M181 45h5M192 43h7M193 46h5M204 44h8M205 47h6M204 49h8M179 58h7M179 61h5M179 64h7M192 58h7M193 61h5M192 64h7M205 58h7M207 61h5M205 64h7M218 58h7M221 61h4M218 64h7M231 58h7M234 61h4M231 64h7" stroke="#555" stroke-width=".8"/><path d="M218 43h7M221 48l4-6M250 43h5v5h-5zM248 57.500h8v7h-8zM248 61h8M217 61h3M230 61h3M322 59h7M324 63h5M336 59h4M334 63h5" fill="none" stroke="#2a82c4"/>
          <path d="m117 45 1.500 1.500L120 45M139 45l1.500 1.500L142 45M345 45l1.500 1.500L348 45M228 45l1.500 1.500L231 45M100 61l1.500 1.500L103 61M122 61l1.500 1.500L125 61M143 61l1.500 1.500L146 61M163 61l1.500 1.500L166 61M262 61l1.500 1.500L265 61M291 61l1.500 1.500L294 61M17 66l1.500 1.500L20 66M46 54l1.500 1.500L49 54M482 42l1.500 1.500L485 42M484 55l1.500 1.500L487 55M480 68l1.500 1.500L483 68M515 42l1.500 1.500L518 42M512 55l1.500 1.500L515 55M512 68l1.500 1.500L515 68M610 75l3 3 3-3M608 107l3 2 3-2" fill="none" stroke="#555" stroke-width=".8"/>
          <path d="M359 39h8v6h-8z" fill="#d0505a"/><path d="M359 52h8v6h-8zM359 65h8v6h-8zM449 39h9v6h-9zM449 52h9v6h-9zM449 65h9v6h-9z" fill="#5d9ccc"/><path d="M361 39v6M364 39v6M359 42h8M361 52v6M359 55h8M362 70l5-5M452 39v6M449 42h9M452 52v6M449 55h9M452 65v6" stroke="#fff" stroke-width=".8"/>
          <g class="x6"><text x="369" y="44">Conditional Formatting ⌄</text><text x="369" y="57">Format as Table ⌄</text><text x="369" y="70">Cell Styles ⌄</text><text x="459" y="44">Insert</text><text x="459" y="57">Delete</text><text x="459" y="70">Format</text><text x="534" y="61" class="c">Sort &amp;</text><text x="534" y="69" class="c">Filter⌄</text><text x="557" y="61" class="c">Find &amp;</text><text x="557" y="69" class="c">Select⌄</text><text x="588" y="61" class="c">Add-ins</text></g>
          <path d="M508 39h-6l3 3-3 3h6M501.500 52.500h8v5h-8z" fill="none" stroke="#555"/><path d="m502 68 4-4 3 3-4 4z" fill="#fff" stroke="#9b3fb0"/><path d="m528 44 2.500-6 2.500 6M529 42h3" fill="none" stroke="#2a82c4"/><path d="M528 46h5l-5 5h5M534 42h7l-2.500 3.500v4l-2-1v-3zM545 51l4-4" fill="none" stroke="#555"/><circle cx="553" cy="43" r="5" fill="none" stroke="#555"/>
          <path d="M581 38h14v14h-14z" fill="#fbe0d2" stroke="#e0754a"/><path d="M583 40h4v4h-4zM589 40h4v4h-4zM583 46h4v4h-4zM589 46h4v4h-4z" fill="#fff" stroke="#e0754a" stroke-width=".8"/>
          <g class="t5"><text x="14" y="80">Clipboard</text><text x="106" y="80">Font</text><text x="207" y="80">Alignment</text><text x="300" y="80">Number</text><text x="391" y="80">Styles</text><text x="464" y="80">Cells</text><text x="525" y="80">Editing</text><text x="578" y="80">Add-ins</text></g>
          <path d="M52 80v-4h4M53 77l3 3M168 80v-4h4M169 77l3 3M268 80v-4h4M347 80v-4h4M348 77l3 3" fill="none" stroke="#888" stroke-width=".7"/>
          <rect x="3" y="83" width="617" height="15" rx="2" fill="#fdf6c8"/><circle cx="12" cy="90" r="3.500" fill="#fff" stroke="#2a82c4"/><path d="M12 90v2M12 88v1" stroke="#2a82c4"/>
          <g class="x6"><text x="20" y="92">POSSIBLE DATA LOSS</text></g><text x="83" y="92" class="t5 ul">Some features might be lost if you save this workbook in the comma-delimited (.csv) format. To preserve these features, save it in an Excel file format.</text>
          <rect x="476" y="84" width="53" height="13" rx="2" fill="#fff" stroke="#ccc"/><rect x="536" y="84" width="32" height="13" rx="2" fill="#fff" stroke="#ccc"/><text x="502" y="92" class="x6 c">Don't show again</text><text x="552" y="92" class="x6 c">Save As...</text><path d="m610 89 4 4M614 89l-4 4" stroke="#555" stroke-width=".8"/>
          <path d="M3 102h49v12H3zM63 102h35v12H63zM101 102h519v12H101z" fill="#fff" stroke="#ddd" stroke-width=".8"/><g class="x6"><text x="6" y="110">A1</text><text x="88" y="110" class="xi">fx</text><text x="107" y="109">_</text></g><path d="m45 107 2 2 2-2M57.500 105v6M66 106l4 4M70 106l-4 4M77 108l2 2 4-4" fill="none" stroke="#888" stroke-width=".8"/>
          <g class="t5"><text><tspan x="25" y="124">A</tspan><tspan x="56" y="124">B</tspan><tspan x="88" y="124">C</tspan><tspan x="119" y="124">D</tspan><tspan x="151" y="124">E</tspan><tspan x="182" y="124">F</tspan><tspan x="213" y="124">G</tspan><tspan x="245" y="124">H</tspan><tspan x="277" y="124">I</tspan><tspan x="308" y="124">J</tspan><tspan x="339" y="124">K</tspan><tspan x="371" y="124">L</tspan><tspan x="401" y="124">M</tspan><tspan x="433" y="124">N</tspan><tspan x="465" y="124">O</tspan><tspan x="496" y="124">P</tspan><tspan x="528" y="124">Q</tspan><tspan x="559" y="124">R</tspan><tspan x="590" y="124">S</tspan></text></g>
          <path d="M11.500 128V117M42.500 120v8M73.500 120v8M105.500 120v8M136.500 120v8M168.500 120v8M199.500 120v8M231.500 120v8M262.500 120v8M294.500 120v8M325.500 120v8M356.500 120v8M388.500 120v8M419.500 120v8M451.500 120v8M482.500 120v8M513.500 120v8M545.500 120v8M576.500 120v8M0 127.500h612" stroke="#ccc" fill="none"/><path d="M0 128h612v12H0z" fill="#fff"/><path d="m617 124 2-4 2 4z" fill="#555"/><circle cx="619" cy="129" r="2" fill="#555"/>
        </g>
      </svg>
    </article>
    <svg class="cursor" viewBox="0 0 13 21" aria-hidden="true"><path d="M1 1V16.500L4.500 13 7.500 19.500 9.800 18.500 7 12.500H12z" fill="#fff" stroke="#000"/></svg>
  </div>
</main>

<footer class="status">
  <span class="s-page">Page 4 of 4</span><span class="s-words">104 words</span>
  <svg class="i14" viewBox="0 0 14 14"><path d="M7 2.500V12M7 2.500C5.500 1 2 1 .500 1.500V12H7M7 2.500C8.500 1 12 1 13.500 1.500V5M7 13l1-3 5-4.500 1 1.500-5 5z" fill="none" stroke="#333"/></svg>
  <button class="btn acc"><svg class="i14" viewBox="0 0 14 14"><circle cx="6" cy="2" r="1.500" fill="none" stroke="#333"/><path d="M1 3.500 4.500 5v3L3 13M11 3.500 7.500 5v2M1 3.500C0 2 2 1.500 4.500 3.500M11 3.500C12 2 10 1.500 7.500 3.500M3 13c1 1 2 0 3-3M8 8.500l5 5M13 8.500l-5 5" fill="none" stroke="#333"/></svg>Accessibility: Investigate</button>
  <div class="views">
    <button class="btn focus"><svg class="i14" viewBox="0 0 14 14"><path d="M3 .500H.5V3M11 .500h2.500V3M3 13.500H.5V11M11 13.500h2.500V11M3.500 2.500h4l3 3v6h-7zM7.500 2.500v3h3" fill="none" stroke="#333"/></svg>Focus</button>
    <button class="btn view" aria-label="Read mode"><svg class="i14" viewBox="0 0 14 14"><path d="M7 2.500V13M7 2C5 .500 2 .500.500 1v11c2-.500 5-.500 6.500 1 1.500-1.500 4.500-1.500 6.500-1V1C12 .500 9 .500 7 2zM2.500 4H5M2.500 6.500H5M2.500 9H5M9 4h2.500M9 6.500h2.500M9 9h2.500" fill="none" stroke="#333"/></svg></button>
    <button class="btn view now" aria-label="Print layout"><svg class="i14" viewBox="0 0 14 14"><path d="M1.500.500h11v13h-11zM3.500 3h7M3.500 5h7M3.500 7h7M3.500 9h7M3.500 11h7" fill="none" stroke="#222"/></svg></button>
    <button class="btn view" aria-label="Web layout"><svg class="i14" viewBox="0 0 14 14"><path d="M5 12.500H.5V.500h12V4M2.500 3h8M2.500 5.500h5M2.500 8h3" fill="none" stroke="#333"/><circle cx="9.500" cy="9.500" r="4" fill="#fff" stroke="#222"/><path d="M5.500 9.500h8M9.500 5.500v8M7.500 7c-1 2-1 3 0 5M11.500 7c1 2 1 3 0 5" fill="none" stroke="#222"/></svg></button>
    <button class="btn zb" aria-label="Zoom out"><svg class="i10" viewBox="0 0 10 10"><path d="M1 5.500H9" stroke="#333"/></svg></button>
    <input type="range" class="zoom" min="0" max="200" value="100" aria-label="Zoom">
    <button class="btn zb" aria-label="Zoom in"><svg class="i10" viewBox="0 0 10 10"><path d="M1 5.500H9M5 1.500v8" stroke="#333"/></svg></button>
    <span class="pct">100%</span>
  </div>
</footer>

<footer class="taskbar">
  <button class="btn widgets" aria-label="Widgets"><svg class="i24" viewBox="0 0 24 24"><path d="M0 1h24v22H0z" fill="#135a9c"/><path d="M2 3h9v18H2z" fill="#fff"/><path d="M13 3h9v10h-9z" fill="#66d4ff"/><path d="M13 13h9v8h-9z" fill="#1d9bf0"/><path d="M13 17h9v4h-9z" fill="#0a78d6"/></svg></button>
  <div class="dock">
    <button class="app" aria-label="Start"><svg class="i24" viewBox="0 0 24 24"><path d="M1 1h10.500v10.500H1zM12.500 1H23v10.500H12.500zM1 12.500h10.500V23H1zM12.500 12.500H23V23H12.500z" fill="url(#g-win)"/></svg></button>
    <label class="search-task"><svg class="i16"><use href="#lens"/></svg><input type="search" placeholder="Search" aria-label="Search Windows"><svg class="flower" viewBox="0 0 32 28"><path d="M2 7c4-3 9-1 10 4v9c-6 4-11 0-11-5zM30 7c-4-3-9-1-10 4v9c6 4 11 0 11-5z" fill="#c9361c"/><circle cx="6" cy="12" r="3" fill="#f08a24"/><circle cx="26" cy="12" r="3" fill="#f08a24"/><circle cx="6" cy="12" r="1.300" fill="#40150c"/><circle cx="26" cy="12" r="1.300" fill="#40150c"/><path d="M10 6 9 3l3 .500L13 1l2 1.500L16 0l1 2.500L19 1l1 2.500L23 3l-1 3-2 5h-8z" fill="#f0662a"/><path d="M12 9h8l1 6-2 12h-6l-2-12z" fill="#1f9a86"/><path d="M12 14h8M13 18h6M13 22h6" stroke="#0d5a55"/><circle cx="14" cy="11" r="1.500" fill="#e03a1c"/><circle cx="18" cy="11" r="1.500" fill="#e03a1c"/><path d="M3 17l5 3M29 17l-5 3" stroke="#f08a24"/></svg></label>
    <button class="app" aria-label="Task view"><svg class="i24" viewBox="0 0 24 24"><path d="M0 7h16v15H0z" fill="#6d6d6d"/><path d="M7 1h17v16H7z" fill="url(#g-task)"/><path d="M7 7h9v10H7z" fill="#b0b0b0"/></svg></button>
    <button class="app" aria-label="Chat"><svg class="i24" viewBox="0 0 24 24"><path d="M12 1a11 11 0 1 1-5 20.800L1 23l1-6A11 11 0 0 1 12 1z" fill="url(#g-chat)"/><path d="M6 8h8v8.500H6zM15 11l4-3v8.500l-4-3z" fill="#fff"/></svg></button>
    <button class="app run" aria-label="File Explorer"><svg class="i24" viewBox="0 0 24 24"><path d="M0 2.500A1.500 1.500 0 0 1 1.500 1H8l2 3v3H0z" fill="#d89a1a"/><path d="M0 6h9l2-2h11a2 2 0 0 1 2 2v16H0z" fill="url(#g-folder)"/><path d="M4 23v-5a2 2 0 0 1 2-2h12a2 2 0 0 1 2 2v5z" fill="#1677c8"/><path d="M8 19h8v1.500H8z" fill="#0c58a0"/></svg></button>
    <button class="app" aria-label="Edge"><svg class="i24" viewBox="0 0 24 24"><circle cx="12" cy="12" r="11.500" fill="#0f6cbd"/><path d="M.6 11C1 4.500 6 .500 12 .500c7 0 11.500 5 11.500 10 0 4-3 6-6.500 6-3 0-4-1.500-3-3C15.500 10 12 7 8.500 7.500 5 8 2 9 .600 11z" fill="url(#g-edge)"/><path d="M8 12c-2 5 1.500 10 7 10.800-7 2-14-3-14.400-10C1.500 9.500 5 7.600 8.500 8 10 8.200 9 10 8 12z" fill="#2b9be0"/><path d="M12 11c-3 4 1 9 8.500 8-2 2.500-4 4-6.500 4-7-1-6-9-2-12z" fill="#0a4f96"/></svg></button>
    <button class="app run" aria-label="Chrome"><svg class="i24" viewBox="0 0 24 24"><circle cx="12" cy="12" r="11.500" fill="#34a853"/><path d="M2 6.200A11.500 11.500 0 0 1 22 6.200H12z" fill="#ea4335"/><path d="M2 6.200 7 15l5-9z" fill="#ea4335"/><path d="M22 6.200A11.500 11.500 0 0 1 12 23.500L17 15l-3-8.800z" fill="#fbbc04"/><circle cx="12" cy="12" r="5.600" fill="#fff"/><circle cx="12" cy="12" r="4.400" fill="#2a7de1"/></svg><span class="dot">I</span></button>
    <button class="app" aria-label="Store"><svg class="i24" viewBox="0 0 24 24"><path d="M7 6V2h10v4" fill="none" stroke="#2fa8e0" stroke-width="1.800"/><path d="M1 6h22v15a2.500 2.500 0 0 1-2.500 2.500h-17A2.500 2.500 0 0 1 1 21z" fill="#f2f2f2"/><path d="M7.500 10h4v4h-4z" fill="#f25022"/><path d="M12.500 10h4v4h-4z" fill="#7fba00"/><path d="M7.500 15h4v4h-4z" fill="#00a4ef"/><path d="M12.500 15h4v4h-4z" fill="#ffb900"/></svg></button>
    <button class="app" aria-label="Snipping Tool"><svg class="i24" viewBox="0 0 24 24"><path d="M0 0h18v22H0z" fill="#f4f4f4"/><path d="M12 3.500H3.500V14H9" fill="none" stroke="#c9471f" stroke-width="3" stroke-dasharray="3 1"/><path d="M13 4v12M8 13.500h9" fill="none" stroke="#888" stroke-width="2"/><path d="M15 13.500h5M13 15v5" stroke="#2f9fe0" stroke-width="1.500"/><circle cx="21.500" cy="14" r="2" fill="none" stroke="#2f9fe0" stroke-width="1.600"/><circle cx="14" cy="21.500" r="2" fill="none" stroke="#2f9fe0" stroke-width="1.600"/></svg></button>
    <button class="app" aria-label="OBS Studio"><svg class="i24" viewBox="0 0 24 24"><circle cx="12" cy="12" r="10.800" fill="#1c1c1c" stroke="#ccc" stroke-width="1.400"/><path d="M9 4c-2 4 0 7 3 8M19 10c-4-1-6 0-7 2M9 19c4-1 5-4 3-7M12 12c-3-1-6 0-7 3M12 12c3 1 4 4 3 7M12 12c-1-3 1-5 4-6" fill="none" stroke="#ccc" stroke-width="1.300"/></svg></button>
    <button class="app run" aria-label="Visual Studio Code"><svg class="i24" viewBox="0 0 24 24"><path d="M17 .500 23.500 3v18L17 23.500z" fill="#2a9df4"/><path d="M17 .500V8L3 19 .500 17z" fill="#1177bb"/><path d="M17 23.500V16L3 5 .500 7z" fill="#2489ca"/></svg></button>
    <button class="app run" aria-label="TaskPro"><svg class="i24" viewBox="0 0 24 24"><path d="M0 0h24v24H0z" fill="#fff"/><path d="M5 4h14v9H5z" fill="#e6f4fb" stroke="#1c6ea4" stroke-width="1.500"/><path d="m8 9 2 2 4-5" fill="none" stroke="#35a853" stroke-width="1.400"/><path d="M10 14h4v2h-4z" fill="#1c6ea4"/><text x="12" y="21" text-anchor="middle" class="tp">TaskPro</text></svg></button>
    <button class="app run active" aria-label="Word"><svg class="i24"><use href="#word"/></svg></button>
  </div>
  <div class="tray">
    <svg class="i14" viewBox="0 0 14 14"><path d="M2 9.500 7 4.500 12 9.500" fill="none" stroke="#fff" stroke-width="1.300"/></svg>
    <svg class="i18" viewBox="0 0 18 18"><path d="M2 7C4 1 12 0 15 5M15.500 1v4.500H11M8 16C4 15.500 3 14 2 11M2 16v-4.500h4" fill="none" stroke="#eee" stroke-width="1.300"/><circle cx="13" cy="13.500" r="4.300" fill="#f00"/></svg>
    <svg class="i18 wifi" viewBox="0 0 18 18"><path d="M1.500 7.500a10.500 10.500 0 0 1 15 0M4 10.300a7 7 0 0 1 10 0M6.500 12.800a3.500 3.500 0 0 1 5 0" fill="none" stroke="#fff" stroke-width="1.300"/><circle cx="9" cy="15" r="1.500" fill="#fff"/></svg>
    <svg class="i18" viewBox="0 0 18 18"><path d="M1 6.500h3L8 3v12l-4-3.500H1zM10.500 6.500c1.300 1.500 1.300 3.500 0 5M13 4.500c2.300 2.500 2.300 6.500 0 9M15.300 2.500c3.200 3.500 3.200 9.500 0 13" fill="none" stroke="#fff" stroke-width="1.200"/></svg>
    <div class="clock"><span>3:30 PM</span><span>8/22/2025</span></div>
    <span class="note">1</span>
  </div>
</footer>
</body>
</html>
```
FILE: styles.css
```css
* { box-sizing: border-box; }
html, body { height: 100%; }
body {
  margin: 0;
  display: grid;
  grid-template-columns: minmax(0, 1fr);
  grid-template-rows: 48px 30px 100px minmax(0, 1fr) 22px 48px;
  background: #e4e4e4;
  color: #262626;
  font: 12px/16px "Open Sans", "Noto Sans", sans-serif;
  overflow: hidden;
}
.defs { position: absolute; width: 0; height: 0; }
svg { display: block; flex: none; }
button, input, select { font: inherit; color: inherit; }
button { background: none; border: 0; padding: 0; margin: 0; }
input[type="search"] { appearance: none; border: 0; outline: 0; background: none; padding: 0; min-width: 0; flex: 1; }
input::placeholder { color: #5f5f5f; opacity: 1; }
a { color: inherit; text-decoration: none; }
.i8 { width: 8px; height: 8px; }
.i10 { width: 10px; height: 10px; }
.i12 { width: 12px; height: 12px; }
.i14 { width: 14px; height: 14px; }
.i16 { width: 16px; height: 16px; }
.i18 { width: 18px; height: 18px; }
.i24 { width: 24px; height: 24px; }
.i30 { width: 28px; height: 30px; }
.logo-letter { font: 700 11px "Open Sans", sans-serif; fill: #fff; }
.btn { display: flex; align-items: center; white-space: nowrap; }
.mid { justify-content: center; }
.gap6 { gap: 6px; }
.gap12 { gap: 12px; }

/* title bar */
.titlebar { display: grid; grid-template-columns: 1fr 366px 1fr; align-items: center; padding-left: 16px; background: linear-gradient(90deg, #e3e3e3, #e8e8e8 60%, #e4e4e4); }
.quick { display: flex; align-items: center; gap: 14px; }
.autosave { display: flex; align-items: center; gap: 7px; margin-left: 2px; font-size: 11px; white-space: nowrap; }
.switch { display: flex; align-items: center; gap: 5px; width: 45px; height: 20px; padding-left: 3px; border: 1px solid #555; border-radius: 10px; background: #fff; color: #555; }
.switch input { position: absolute; opacity: 0; width: 1px; height: 1px; margin: 0; }
.knob { width: 14px; height: 14px; border-radius: 50%; background: #5c5c5c; }
.undo { gap: 4px; margin-right: -4px; }
.customize { margin-left: 3px; }
.doc-name { gap: 4px; margin-left: 12px; font-size: 11px; }
.search-top { display: flex; align-items: center; gap: 12px; height: 31px; padding: 0 12px; background: #fafafa; border: 1px solid #ddd; border-radius: 4px; box-shadow: 0 1px 2px #bbb; color: #444; }
.window-tools { display: flex; justify-content: flex-end; align-items: center; }
.sign-in { width: 58px; height: 19px; margin-right: 10px; background: #222; color: #fff; font-size: 11px; }
.win { width: 48px; justify-content: center; }

/* ribbon tabs */
.tabs { display: grid; grid-template-columns: 45px 57px 53px 50px 61px 59px 84px 69px 61px 46px 1fr auto; align-items: center; padding: 0 12px 0 22px; font-size: 13px; background: linear-gradient(90deg, #e3e3e3, #e8e8e8 60%, #e4e4e4); }
.tabs .on { font-weight: 600; }
.tabs .on span { display: inline-block; border-bottom: 2px solid #2b579a; line-height: 20px; margin-bottom: -4px; }
.share { display: flex; align-items: center; justify-content: center; gap: 5px; width: 71px; height: 24px; border-radius: 4px; background: #185abd; color: #fff; font-size: 12px; }

/* ribbon */
.ribbon { display: flex; margin: 0 8px; padding: 5px 0 0; background: #fff; border-radius: 8px; box-shadow: 0 1px 3px #bbb; position: relative; z-index: 1; }
.group { display: flex; flex-direction: column; flex: none; border-right: 1px solid #d5d5d5; height: 90px; }
.cap { display: grid; grid-template-columns: minmax(0, 1fr) 12px; margin-top: auto; margin-bottom: -2px; font-size: 11px; line-height: 14px; text-align: center; }
.cap.plain { grid-template-columns: minmax(0, 1fr); }
.launch { align-self: center; }
.row { display: grid; height: 32px; align-items: center; align-content: center; }
.bar { width: 1px; height: 24px; background: #d5d5d5; }
.g-clip { width: 175px; }
.g-font { width: 312px; padding-left: 8px; padding-top: 3px; }
.g-para { width: 252px; padding-left: 8px; padding-top: 3px; }
.g-font .cap, .g-para .cap { margin-left: -16px; }
.group.g-styles { flex: 1; min-width: 0; padding: 7px 0 0 10px; }
.g-styles .cap { margin-left: -10px; }
.g-edit { width: 95px; padding-left: 12px; }
.g-edit .cap { margin-left: -14px; }
.g-add { width: 63px; }
.clip { display: flex; gap: 8px; padding-left: 18px; }
.big { display: flex; flex-direction: column; align-items: center; gap: 3px; padding-top: 3px; }
.clip .big { width: 34px; }
.stack { display: flex; flex-direction: column; font-size: 11px; }
.stack .btn { height: 26px; gap: 4px; }
.stack .btn:first-child { height: 24px; }
.off { color: #b0b0b0; }
.find .i8 { margin-left: 14px; }
.sel { gap: 3px; }
.combo { display: grid; grid-template-columns: 1fr 11px; align-items: center; height: 24px; border: 1px solid #888; border-radius: 4px; margin-right: 3px; }
.combo select { appearance: none; border: 0; background: none; padding: 0 0 0 3px; grid-area: 1 / 1 / 2 / 3; height: 22px; outline: 0; width: 100%; font-size: 12px; }
.combo svg { grid-area: 1 / 2; }
.font-1 { grid-template-columns: 127px 44px 26px 27px 6px 39px 6px 18px; }
.font-2 { grid-template-columns: 24px 28px 40px 26px 29px 24px 7px 42px 41px 40px; font-size: 13px; }
.para-1 { grid-template-columns: 41px 41px 39px 7px 26px 22px 6px 22px 8px 16px; padding-left: 4px; }
.para-2 { grid-template-columns: 31px 26px 26px 22px 6px 38px 7px 41px 30px; }
.a-lg { font-size: 16px; }
.a-md { font-size: 14px; }
.up { align-self: flex-start; }
.b { font-weight: 700; }
.it { font-family: "Liberation Serif", serif; font-style: italic; font-size: 15px; }
.b sub, .b sup { font-size: 8px; line-height: 8px; color: #2a82c4; }
.b sub { align-self: flex-end; }
.b sup { align-self: flex-start; }
.pressed { width: 24px; height: 24px; background: #ebebeb; border: 1px solid #666; border-radius: 5px; }
.gallery { display: grid; grid-template-columns: repeat(8, minmax(0, 1fr)) 25px; height: 60px; margin-right: 10px; border: 1px solid #ccc; border-radius: 4px; font-family: Lato, sans-serif; color: #000; font-size: 14px; }
.st { overflow: hidden; white-space: nowrap; line-height: 40px; }
.chosen { margin: 1px 0; outline: 1px solid #555; border: 3px solid #eaeaea; }
.st-h1 { font-size: 25px; font-weight: 300; color: #2f5496; }
.st-h2 { font-size: 19px; font-weight: 300; color: #2f5496; }
.st-title { font-size: 34px; font-weight: 300; }
.st-sub { font-size: 18px; color: #5a5a5a; font-weight: 300; }
.st-se { font-size: 15px; font-style: italic; color: #404040; }
.st-e { font-size: 15px; font-style: italic; }
.more { display: grid; place-items: center; border: 1px solid #555; border-radius: 0 4px 4px 0; margin: -1px; }
.g-add .big { padding-top: 2px; font-size: 12px; }
.collapse { flex: none; width: 97px; justify-content: flex-end; align-self: flex-end; padding: 0 10px 9px 0; }

/* work area */
.work { display: grid; grid-template-columns: 350px minmax(0, 1fr); min-height: 0; }
.pane { background: #efefef; border-right: 1px solid #cfcfcf; padding: 16px 18px 0 14px; }
.pane-head { display: grid; grid-template-columns: 1fr 42px 14px; align-items: center; margin-right: -2px; height: 20px; }
.pane-head h2 { margin: 0; font-size: 15px; line-height: 20px; font-weight: 600; }
.pane-search { display: flex; align-items: center; gap: 4px; margin-top: 17px; height: 24px; padding: 0 2px 0 6px; background: #fff; border: 1px solid #aaa; }
.pane-tabs { display: flex; gap: 22px; margin-top: 19px; padding-left: 2px; }
.pane-tabs a { line-height: 20px; padding-bottom: 5px; border-bottom: 2px solid transparent; }
.pane-tabs .on { color: #2b579a; font-weight: 700; border-color: #2b579a; }
.thumbs { display: grid; grid-template-columns: 119px 119px; column-gap: 16px; row-gap: 9px; padding: 17px 0 0 25px; }
.thumb { display: flex; flex-direction: column; gap: 3px; text-align: center; line-height: 20px; padding-bottom: 1px; }
.thumb > svg { width: 119px; height: 154px; background: #fff; border: 1px solid #a0a0a0; }
.current { color: #2b579a; }
.current > svg { outline: 2px solid #2f5f8f; }
.canvas { position: relative; display: flex; flex-direction: column; align-items: center; gap: 15px; padding-right: 18px; min-height: 0; overflow: hidden; background: linear-gradient(100deg, #e2e2e2, #e6e7e7 40%, #e0e2e2); }
.sheet { width: 816px; background: #fff; border: 1px solid #c8c8c8; }
.prev { flex: none; height: 124px; border-top: 0; }
.page { flex: 1; min-height: 0; overflow: hidden; border-bottom: 0; padding: 94px 94px 0 95px; color: #000; font: 15px/22px Lato, sans-serif; }
.page p { margin: 0 -4px 12px 0; }
.page .second { margin-top: 15px; }
.page sup { font-size: 10px; line-height: 0; }
.sp { text-decoration: underline wavy #e03030 1px; text-underline-offset: 2px; }
.gr { text-decoration: underline double #2f6fc0 1px; text-underline-offset: 2px; }
.caret { display: inline-block; width: 1px; height: 18px; background: #999; vertical-align: middle; }
.shot { width: 624px; }
.shot text { font-family: "Open Sans", sans-serif; }
.t5, .names, .tabtext, .tb { font-size: 5px; fill: #444; }
.t6, .x6 { font-size: 6px; fill: #444; }
.dim { font-size: 4px; fill: #999; }
.dialog .t5 { font-size: 4px; fill: #222; }
.dialog .tb { font-size: 4px; fill: #000; }
.names { fill: #2a6ca8; }
.act { fill: #1b70b8; }
.tabtext { fill: #c8ced4; }
.tb, .xb { font-weight: 700; }
.x8 { font-size: 8px; }
.xi { font-style: italic; }
.w { fill: #fff; }
.pale { fill: #b0b0b0; }
.shot .ul { font-family: "DejaVu Sans", sans-serif; text-decoration: underline; }
.c { text-anchor: middle; }
.e { text-anchor: end; }
.sf { font-size: 6px; font-weight: 600; font-style: italic; fill: #fff; text-anchor: middle; }
.dl { font-size: 13px; fill: #333; }
.drop { filter: drop-shadow(0 1px 3px rgba(0, 0, 0, .45)); }
.cursor { position: absolute; left: 971px; top: 640px; width: 13px; height: 21px; }

/* status bar */
.status { display: flex; align-items: center; background: #f5f5f5; padding-left: 12px; font-size: 11px; color: #333; border-top: 1px solid #fff; }
.s-page { width: 76px; }
.s-words { width: 72px; }
.acc { margin-left: 21px; gap: 3px; font-weight: 600; }
.views { display: flex; align-items: center; margin-left: auto; height: 21px; padding-right: 8px; }
.focus { gap: 4px; width: 59px; }
.view { width: 40px; height: 100%; justify-content: center; }
.now { background: #e0e0e0; }
.zb { margin: 0 4px; }
.zoom { appearance: none; width: 100px; height: 20px; margin: 0 1px; background: linear-gradient(#666, #666) center / 100% 1px no-repeat; }
.zoom::-webkit-slider-thumb { appearance: none; width: 5px; height: 11px; background: #555; }
.pct { width: 34px; text-align: right; }

/* taskbar */
.taskbar { display: grid; grid-template-columns: 1fr auto 1fr; align-items: center; background: #202020; color: #fff; }
.widgets { padding-left: 16px; }
.dock { display: flex; align-items: center; }
.app { position: relative; display: grid; place-items: center; width: 44px; height: 48px; }
.search-task { display: flex; align-items: center; gap: 9px; width: 218px; height: 32px; margin: 0 2px 0 3px; padding: 0 12px 0 11px; border-radius: 16px; background: #383838; color: #eee; }
.search-task input { font-size: 13px; }
.search-task input::placeholder { color: #ccc; }
.flower { width: 32px; height: 28px; }
.run::after { content: ""; position: absolute; bottom: 5px; left: 19px; width: 6px; height: 3px; border-radius: 2px; background: #999; }
.active::before { content: ""; position: absolute; inset: 4px 2px; border-radius: 4px; background: rgba(255, 255, 255, .08); }
.active::after { left: 14px; width: 16px; background: #4cc2ff; }
.dot { position: absolute; top: 7px; right: 2px; width: 16px; height: 16px; border-radius: 50%; background: #c2410c; color: #fff; font-size: 9px; line-height: 16px; text-align: center; }
.tp { font: 700 5px "Open Sans", sans-serif; fill: #234; }
.tray { display: flex; justify-content: flex-end; align-items: center; gap: 8px; padding-right: 20px; }
.tray .wifi { margin: 0 -1px 0 2px; }
.clock { display: flex; flex-direction: column; text-align: right; margin-right: 3px; font-size: 12px; width: 60px; }
.note { width: 16px; height: 16px; border-radius: 50%; background: #4cc2ff; color: #111; font-size: 10px; text-align: center; }
```
